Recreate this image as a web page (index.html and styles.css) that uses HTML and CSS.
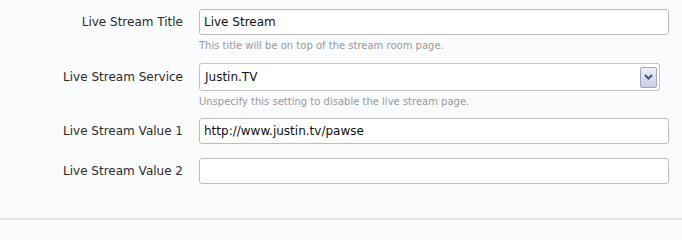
FILE: index.html
```html
<!DOCTYPE html>
<html>
<head>
<meta charset="utf-8">
<link rel="stylesheet" href="styles.css">
</head>
<body>
<div class="panel">
  <form class="form">
    <div class="row row-first">
      <label class="label" for="f1">Live Stream Title</label>
      <div class="field">
        <input id="f1" class="text" type="text" value="Live Stream">
        <p class="hint">This title will be on top of the stream room page.</p>
      </div>
    </div>
    <div class="row row-select">
      <label class="label label-select" for="f2">Live Stream Service</label>
      <div class="field">
        <div class="select">
          <span class="select-value">Justin.TV</span>
          <span class="select-btn">
            <svg width="9" height="6" viewBox="0 0 9 6"><path d="M1 1 L4.5 4.5 L8 1" fill="none" stroke="#44577a" stroke-width="2"/></svg>
          </span>
        </div>
        <p class="hint">Unspecify this setting to disable the live stream page.</p>
      </div>
    </div>
    <div class="row row-third">
      <label class="label" for="f3">Live Stream Value 1</label>
      <div class="field">
        <input id="f3" class="text" type="text" value="http://www.justin.tv/pawse">
      </div>
    </div>
    <div class="row row-fourth">
      <label class="label" for="f4">Live Stream Value 2</label>
      <div class="field">
        <input id="f4" class="text" type="text" value="">
      </div>
    </div>
  </form>
  <div class="footer-line"></div>
</div>
</body>
</html>
```

FILE: styles.css
```css
html, body {
  margin: 0;
  padding: 0;
  background: #fafbfd;
}
body {
  font-family: "DejaVu Sans", Verdana, sans-serif;
  color: #222;
  width: 682px;
  height: 220px;
  overflow: hidden;
}
.panel {
  height: 220px;
  display: flex;
  flex-direction: column;
}
.form {
  flex: 1;
  margin: 0;
}
.footer-line {
  height: 2px;
  background: #e3e8e4;
}
.row {
  display: grid;
  grid-template-columns: 183px 470px;
  column-gap: 16px;
  align-items: start;
}
.row-first { margin-top: 9px; }
.row-select { margin-top: 11px; }
.row-third { margin-top: 10px; }
.row-fourth { margin-top: 14px; }
.label {
  height: 26px;
  display: flex;
  align-items: center;
  justify-content: flex-end;
  font-size: 12px;
  color: #2a2a2a;
  white-space: nowrap;
}
.label-select { height: 28px; }
.field {
  display: flex;
  flex-direction: column;
}
.text {
  box-sizing: border-box;
  width: 470px;
  height: 26px;
  margin: 0;
  padding: 0 4px;
  border: 1px solid #bdbdbd;
  border-radius: 3px;
  background: #fff;
  font-family: "DejaVu Sans", Verdana, sans-serif;
  font-size: 12px;
  color: #111;
  outline: none;
}
.select {
  box-sizing: border-box;
  width: 461px;
  height: 28px;
  border: 1px solid #c3c3c3;
  border-radius: 3px;
  background: #fff;
  display: flex;
  align-items: center;
  justify-content: space-between;
  padding: 0 2px 0 5px;
}
.select-value {
  font-size: 12px;
  color: #111;
}
.select-btn {
  box-sizing: border-box;
  width: 17px;
  height: 21px;
  border: 1px solid #9ea6c2;
  border-radius: 2px;
  background: linear-gradient(#eef1f8, #c7cde8);
  display: flex;
  align-items: center;
  justify-content: center;
}
.select-btn svg { display: block; }
.hint {
  margin: 5px 0 0;
  font-size: 10px;
  line-height: 12px;
  color: #999;
}
```
